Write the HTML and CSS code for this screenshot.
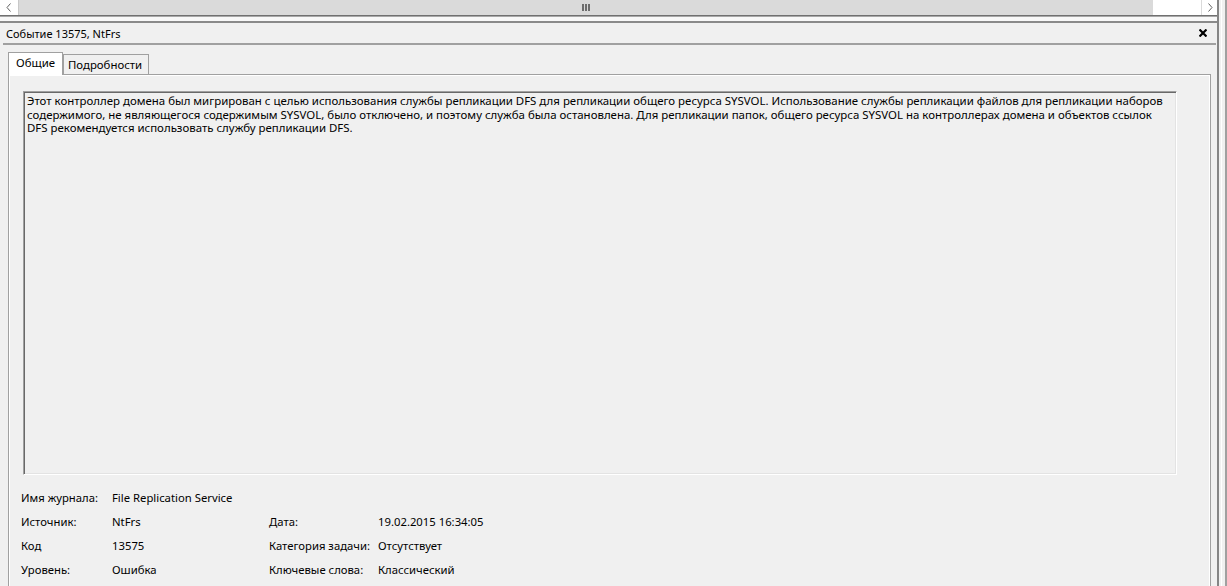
FILE: index.html
```html
<!DOCTYPE html>
<html lang="ru">
<head>
<meta charset="utf-8">
<title>Событие 13575, NtFrs</title>
<link rel="stylesheet" href="styles.css">
</head>
<body>
<div class="frame">
  <div class="main">
    <div class="hscroll">
      <div class="sb-btn sb-left">
        <svg width="6" height="9" viewBox="0 0 6 9"><polyline points="4.5,0.5 1,4.5 4.5,8.5" fill="none" stroke="#606060" stroke-width="1"/></svg>
      </div>
      <div class="sb-thumb">
        <span class="grip"></span><span class="grip"></span><span class="grip"></span>
      </div>
      <div class="sb-track"></div>
      <div class="sb-btn sb-right">
        <svg width="6" height="9" viewBox="0 0 6 9"><polyline points="1.5,0.5 5,4.5 1.5,8.5" fill="none" stroke="#606060" stroke-width="1"/></svg>
      </div>
    </div>
    <div class="sep"></div>
    <div class="header">
      <span class="title">Событие 13575, NtFrs</span>
      <svg class="close" width="8" height="8" viewBox="0 0 8 8"><path d="M0.5 0.5 L7.5 7.5 M7.5 0.5 L0.5 7.5" stroke="#000" stroke-width="2.2" fill="none"/></svg>
    </div>
    <div class="hline"></div>
    <div class="tablist">
      <div class="tab active">Общие</div>
      <div class="tab">Подробности</div>
    </div>
    <div class="panel">
      <div class="desc">Этот контроллер домена был мигрирован с целью использования службы репликации DFS для репликации общего ресурса SYSVOL. Использование службы репликации файлов для репликации наборов<br>содержимого, не являющегося содержимым SYSVOL, было отключено, и поэтому служба была остановлена. Для репликации папок, общего ресурса SYSVOL на контроллерах домена и объектов ссылок<br>DFS рекомендуется использовать службу репликации DFS.</div>
      <div class="info">
        <span>Имя журнала:</span><span class="wide">File Replication Service</span>
        <span>Источник:</span><span>NtFrs</span><span>Дата:</span><span>19.02.2015 16:34:05</span>
        <span>Код</span><span>13575</span><span>Категория задачи:</span><span>Отсутствует</span>
        <span>Уровень:</span><span>Ошибка</span><span>Ключевые слова:</span><span>Классический</span>
      </div>
    </div>
  </div>
  <div class="edge"></div>
</div>
</body>
</html>
```
FILE: styles.css
```css
html, body {
  margin: 0;
  padding: 0;
  height: 586px;
  overflow: hidden;
  background: #f0f0f0;
}
body {
  font-family: "Noto Sans", "Open Sans", sans-serif;
  font-size: 11.3px;
  color: #000;
}
.frame {
  display: flex;
  height: 586px;
}
.main {
  width: 1217px;
  flex: none;
}
.edge {
  width: 10px;
  flex: none;
  background: linear-gradient(to right, #858585 0 2px, #f0f0f0 2px 4px, #ffffff 4px 5px, #f0f0f0 5px 8px, #a0a0a0 8px 10px);
}
.hscroll {
  display: flex;
  height: 15px;
}
.sb-btn {
  background: #fff;
  display: flex;
  align-items: center;
  justify-content: center;
}
.sb-left {
  width: 18px;
  border-right: 1px solid #c8c8c8;
}
.sb-right {
  width: 15px;
  border-left: 1px solid #dadada;
}
.sb-thumb {
  flex: 1;
  background: #dadada;
  display: flex;
  justify-content: center;
  align-items: center;
  gap: 1px;
}
.grip {
  width: 2px;
  height: 7px;
  background: #6d6d6d;
}
.sb-track {
  width: 48px;
  background: #fff;
}
.sep {
  height: 8px;
  background: linear-gradient(#707070 0 1px, #a8a8a8 1px 2px, #f8f8f8 2px 6px, #8a8a8a 6px 8px);
}
.header {
  height: 20px;
  display: flex;
  align-items: center;
  justify-content: space-between;
  padding: 0 10px 0 6px;
}
.title {
  font-size: 11px;
}
.hline {
  height: 2px;
  background: #a0a0a0;
  margin: 0 1px 0 3px;
}
.tablist {
  display: flex;
  align-items: flex-end;
  height: 22px;
  margin-top: 7px;
  padding-left: 8px;
  position: relative;
  z-index: 1;
}
.tab {
  box-sizing: border-box;
  height: 20px;
  width: 86px;
  padding: 3px 0 0 4px;
  line-height: 14px;
  border: 1px solid #a0a0a0;
  border-bottom: none;
  background: #f0f0f0;
  font-size: 11.4px;
}
.tab.active {
  height: 23px;
  width: 55px;
  margin-bottom: -1px;
  padding-left: 7px;
  background: #fff;
}
.panel {
  margin-left: 8px;
  width: 1203px;
  height: 560px;
  box-sizing: border-box;
  border: 1px solid #a0a0a0;
  box-shadow: inset 0 1px #fff, inset 1px 0 #fff, inset -1px 0 #fff;
  padding: 16px 0 0 12px;
}
.desc {
  box-sizing: border-box;
  width: 1154px;
  height: 384px;
  margin-left: 2px;
  border-top: 1px solid #a0a0a0;
  border-left: 1px solid #a0a0a0;
  border-right: 1px solid #fff;
  border-bottom: 1px solid #fff;
  box-shadow: inset 1px 1px #696969, inset -1px -1px #e3e3e3;
  padding: 2px 0 0 3px;
  font-size: 11.45px;
  line-height: 13.5px;
  white-space: nowrap;
  overflow: hidden;
}
.info {
  display: grid;
  grid-template-columns: 91px 157px 109px auto;
  grid-auto-rows: 24px;
  line-height: 24px;
  margin-top: 11px;
}
.info .wide {
  grid-column: 2 / 5;
}
```
